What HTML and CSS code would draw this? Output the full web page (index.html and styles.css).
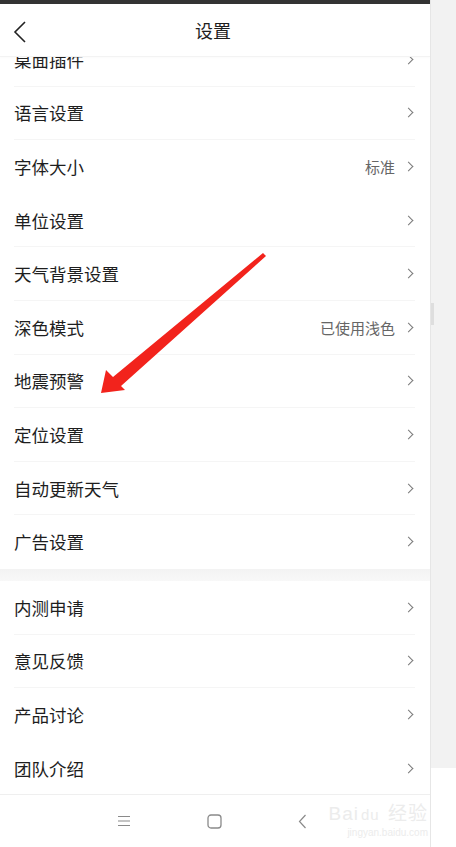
FILE: index.html
```html
<!DOCTYPE html>
<html lang="zh-CN">
<head>
    <meta charset="UTF-8">
    <meta name="viewport" content="width=device-width, initial-scale=1.0">
    <title>设置</title>
    <link rel="stylesheet" href="styles.css">
</head>
<body>

<div class="screen">
    <div class="phone">
        <div class="status"></div>
        <div class="header">
            <svg class="back" width="14" height="22" viewBox="0 0 14 22">
                <polyline points="12,1 2,11 12,21" fill="none" stroke="#222" stroke-width="1.6"/>
            </svg>
            <h1>设置</h1>
        </div>

        <div class="list">
            <div class="group first">
                <div class="row"><span class="label">桌面插件</span><span class="chev"></span></div>
                <div class="row"><span class="label">语言设置</span><span class="chev"></span></div>
                <div class="row no-line"><span class="label">字体大小</span><span class="value">标准</span><span class="chev"></span></div>
                <div class="row"><span class="label">单位设置</span><span class="chev"></span></div>
                <div class="row"><span class="label">天气背景设置</span><span class="chev"></span></div>
                <div class="row"><span class="label">深色模式</span><span class="value">已使用浅色</span><span class="chev"></span></div>
                <div class="row"><span class="label">地震预警</span><span class="chev"></span></div>
                <div class="row"><span class="label">定位设置</span><span class="chev"></span></div>
                <div class="row"><span class="label">自动更新天气</span><span class="chev"></span></div>
                <div class="row no-line"><span class="label">广告设置</span><span class="chev"></span></div>
            </div>
            <div class="gap"></div>
            <div class="group">
                <div class="row"><span class="label">内测申请</span><span class="chev"></span></div>
                <div class="row"><span class="label">意见反馈</span><span class="chev"></span></div>
                <div class="row no-line"><span class="label">产品讨论</span><span class="chev"></span></div>
                <div class="row"><span class="label">团队介绍</span><span class="chev"></span></div>
            </div>

            <!-- red arrow drawn over the list -->
            <svg class="arrow" width="430" height="520" viewBox="0 0 430 520">
                <polygon points="263,196 266,199 121,329 125,333 101,336 106,313 113,320" fill="#f2231c"/>
            </svg>
        </div>

        <div class="navbar">
            <svg width="14" height="12" viewBox="0 0 14 12">
                <path d="M1 1.5h12M1 6h12M1 10.5h12" stroke="#8a8a8a" stroke-width="1.2"/>
            </svg>
            <svg width="15" height="15" viewBox="0 0 15 15">
                <rect x="1" y="1" width="13" height="13" rx="3" fill="none" stroke="#8a8a8a" stroke-width="1.3"/>
            </svg>
            <svg width="9" height="15" viewBox="0 0 9 15">
                <polyline points="7.5,1 1.5,7.5 7.5,14" fill="none" stroke="#8a8a8a" stroke-width="1.2"/>
            </svg>
        </div>

        <div class="watermark">
            <div class="wm-logo">Bai<span class="paw">du</span> 经验</div>
            <div class="wm-url">jingyan.baidu.com</div>
        </div>
    </div>

    <div class="side">
        <div class="side-top"><span class="thumb"></span></div>
    </div>
</div>

</body>
</html>
```

FILE: styles.css
```css
* {
    box-sizing: border-box;
    margin: 0;
    padding: 0;
}
body {
    font-family: "Noto Sans CJK SC", "Noto Sans", sans-serif;
    background: #fff;
    width: 456px;
    height: 847px;
    overflow: hidden;
}
.screen {
    display: flex;
    height: 847px;
}
.phone {
    position: relative;
    width: 430px;
    height: 847px;
    background: #fff;
    display: flex;
    flex-direction: column;
    overflow: hidden;
}
.status {
    height: 4px;
    background: #333;
}
.header {
    position: relative;
    z-index: 2;
    height: 53px;
    background: #fff;
    display: flex;
    align-items: center;
    justify-content: center;
    border-bottom: 1px solid #f3f3f3;
    box-shadow: 0 1px 2px rgba(0, 0, 0, 0.02);
}
.header h1 {
    font-size: 18px;
    font-weight: 400;
    color: #1e1e1e;
    margin-left: -4px;
}
.back {
    position: absolute;
    left: 13px;
    top: 17px;
}
.list {
    position: relative;
    height: 737px;
    overflow: hidden;
}
.group.first {
    margin-top: -24px;
}
.row {
    height: 53.6px;
    margin: 0 15px 0 14px;
    display: flex;
    align-items: center;
    border-bottom: 1px solid #f5f5f5;
}
.row.no-line {
    border-bottom-color: transparent;
}
.label {
    flex: 1;
    font-size: 17.5px;
    color: #1e1e1e;
}
.value {
    font-size: 15px;
    color: #666;
    margin-right: 10px;
}
.chev {
    width: 7px;
    height: 7px;
    border-top: 1.3px solid #7a7a7a;
    border-right: 1.3px solid #7a7a7a;
    transform: rotate(45deg);
    margin-right: 3px;
}
.gap {
    height: 12px;
    background: linear-gradient(#f3f3f3, #f8f8f8);
}
.arrow {
    position: absolute;
    left: 0;
    top: 0;
}
.navbar {
    height: 53px;
    border-top: 1px solid #efefef;
    display: flex;
    align-items: center;
    justify-content: center;
    gap: 76px;
    padding-right: 6px;
}
.watermark {
    position: absolute;
    right: 2px;
    bottom: 8px;
    color: #ececec;
    text-align: right;
}
.wm-logo {
    font-family: "Liberation Sans", sans-serif;
    font-size: 19px;
    line-height: 24px;
    letter-spacing: 1px;
}
.paw {
    font-size: 15px;
    margin: 0 2px;
}
.wm-url {
    font-family: "Liberation Sans", sans-serif;
    font-size: 10px;
    line-height: 12px;
}
.side {
    width: 26px;
    border-left: 1px solid #e6e6e6;
    background: #fff;
}
.side-top {
    height: 768px;
    background: #f2f2f2;
    padding-top: 303px;
}
.thumb {
    display: block;
    width: 3px;
    height: 22px;
    background: #dedede;
}
```
